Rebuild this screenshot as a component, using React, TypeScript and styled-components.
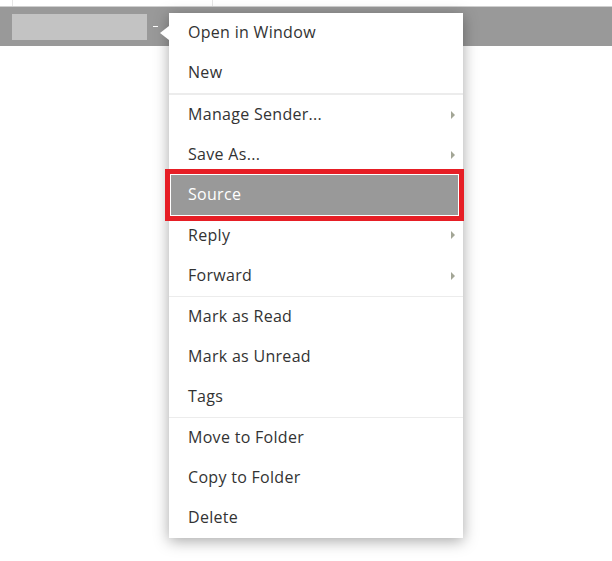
import React from "react";
import styled, { createGlobalStyle } from "styled-components";

const Global = createGlobalStyle`
  html, body { margin: 0; padding: 0; background: #fff; }
  body { font-family: "Open Sans", "Noto Sans", "Liberation Sans", sans-serif; }
`;

const Page = styled.div`
  position: relative;
  width: 612px;
  height: 561px;
  overflow: hidden;
  background: #fff;
`;

const TopStrip = styled.div`
  height: 6px;
  display: grid;
  grid-template-columns: 13px 200px 1fr;
  border-bottom: 1px solid #cfcfcf;
`;

const StripCell = styled.div<{ $line?: boolean }>`
  border-right: ${(p) => (p.$line ? "1px solid #e6e6e6" : "none")};
`;

const Bar = styled.div`
  height: 39px;
  background: #999;
  display: flex;
  align-items: center;
  padding-left: 12px;
  gap: 6px;
`;

const Field = styled.div`
  width: 135px;
  height: 26px;
  background: #c3c3c3;
`;

const Dash = styled.div`
  width: 5px;
  height: 1px;
  background: #fff;
  margin-top: -1px;
`;

const Menu = styled.div`
  position: absolute;
  left: 169px;
  top: 13px;
  width: 294px;
  background: #fff;
  box-shadow: 0 3px 14px rgba(0, 0, 0, 0.35);
`;

const Caret = styled.div`
  position: absolute;
  left: -9px;
  top: 13px;
  width: 0;
  height: 0;
  border-top: 7px solid transparent;
  border-bottom: 7px solid transparent;
  border-right: 9px solid #fff;
`;

const Group = styled.div<{ $sep?: number }>`
  border-top: ${(p) => (p.$sep ? `${p.$sep}px solid #ececec` : "none")};
`;

const Item = styled.div<{ $active?: boolean }>`
  position: relative;
  height: 40.1px;
  box-sizing: border-box;
  padding-bottom: 2px;
  display: flex;
  align-items: center;
  padding-left: 19px;
  font-size: 16px;
  letter-spacing: 0.3px;
  color: ${(p) => (p.$active ? "#fff" : "#333")};
  background: ${(p) => (p.$active ? "#999" : "transparent")};
  white-space: nowrap;
`;

const Highlight = styled.div`
  position: absolute;
  left: -4px;
  right: -1px;
  top: -6px;
  bottom: -6px;
  border: 5px solid #e61e25;
  box-shadow: inset 0 0 0 1px #fff;
  pointer-events: none;
`;

const Arrow = styled.span`
  position: absolute;
  right: 8px;
  top: 16px;
  width: 0;
  height: 0;
  border-top: 4px solid transparent;
  border-bottom: 4px solid transparent;
  border-left: 4px solid #a3a696;
`;

type Entry = { label: string; sub?: boolean; active?: boolean };

const groups: { sep: number; items: Entry[] }[] = [
  { sep: 0, items: [{ label: "Open in Window" }, { label: "New" }] },
  {
    sep: 2,
    items: [
      { label: "Manage Sender...", sub: true },
      { label: "Save As...", sub: true },
      { label: "Source", active: true },
      { label: "Reply", sub: true },
      { label: "Forward", sub: true },
    ],
  },
  { sep: 1, items: [{ label: "Mark as Read" }, { label: "Mark as Unread" }, { label: "Tags" }] },
  { sep: 1, items: [{ label: "Move to Folder" }, { label: "Copy to Folder" }, { label: "Delete" }] },
];

export default function App() {
  return (
    <Page>
      <Global />
      <TopStrip>
        <StripCell $line />
        <StripCell $line />
        <StripCell />
      </TopStrip>
      <Bar>
        <Field />
        <Dash />
      </Bar>
      <Menu>
        <Caret />
        {groups.map((g, i) => (
          <Group key={i} $sep={g.sep}>
            {g.items.map((e) => (
              <Item key={e.label} $active={e.active}>
                {e.label}
                {e.sub && <Arrow />}
                {e.active && <Highlight />}
              </Item>
            ))}
          </Group>
        ))}
      </Menu>
    </Page>
  );
}
